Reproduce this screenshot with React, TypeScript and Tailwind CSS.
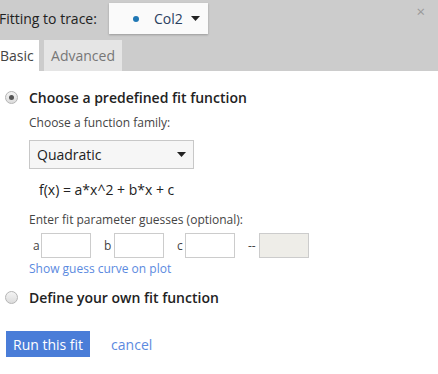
import React, { useState } from 'react';

const font = { fontFamily: '"Open Sans", "Noto Sans", sans-serif' };

const Radio: React.FC<{ checked?: boolean }> = ({ checked }) => (
  <span className="w-[13px] h-[13px] rounded-full border border-[#b5b5b5] bg-gradient-to-b from-[#f4f4f4] to-[#dcdcdc] flex items-center justify-center shrink-0">
    {checked && <span className="w-[5px] h-[5px] rounded-full bg-[#555]" />}
  </span>
);

const Caret: React.FC = () => (
  <svg width="9" height="5" viewBox="0 0 9 5" className="shrink-0">
    <path d="M0 0h9L4.5 5z" fill="#222" />
  </svg>
);

const GuessInput: React.FC<{ label: string; w: string; disabled?: boolean }> = ({ label, w, disabled }) => (
  <div className="flex items-center">
    <span className={`text-[12px] text-[#444] ${w}`}>{label}</span>
    <div className={`w-[50px] h-[25px] border border-[#ccc] ${disabled ? 'bg-[#eeede8]' : 'bg-white'}`} />
  </div>
);

export default function App() {
  const [tab, setTab] = useState('basic');
  return (
    <div className="w-[438px] h-[374px] bg-white overflow-hidden text-[#222]" style={font}>
      {/* Header */}
      <div className="bg-[#cccccc] h-[71px] relative">
        <div className="flex items-center h-[40px] -ml-[1px]">
          <span className="text-[14px] text-[#222] pb-[4px]">Fitting to trace:</span>
          <div className="ml-[12px] mb-[3px] w-[99px] h-[31px] bg-[#fafafa] shadow-[0_1px_2px_rgba(0,0,0,0.25)] flex items-center pl-[24px] pr-[8px]">
            <span className="w-[6px] h-[6px] rounded-full bg-[#1f77b4]" />
            <span className="ml-[15px] text-[14px] text-[#2a3f5f] flex-1">Col2</span>
            <Caret />
          </div>
        </div>
        <span className="absolute right-[13px] top-[0px] text-[#999] text-[15px]">×</span>
        <div className="flex items-end h-[31px]">
          <button
            onClick={() => setTab('basic')}
            className={`h-[31px] w-[39px] text-left text-[14px] ${tab === 'basic' ? 'bg-white text-[#444]' : 'bg-[#e6e6e6] text-[#666]'}`}
          >
            Basic
          </button>
          <button
            onClick={() => setTab('advanced')}
            className={`ml-[5px] h-[31px] w-[78px] text-[14px] ${tab === 'advanced' ? 'bg-white text-[#444]' : 'bg-[#e5e5e5] text-[#777]'}`}
          >
            Advanced
          </button>
        </div>
      </div>

      {/* Body */}
      <div className="pl-[5px] pt-[17px]">
        <div className="flex items-center gap-[11px] h-[18px]">
          <Radio checked />
          <span className="text-[14px] font-semibold text-[#222]">Choose a predefined fit function</span>
        </div>

        <div className="pl-[24px]">
          <div className="text-[12px] text-[#444] mt-[8px]">Choose a function family:</div>
          <div className="mt-[8px] w-[165px] h-[29px] border border-[#c8c8c8] bg-[#f6f6f6] flex items-center pl-[7px] pr-[7px]">
            <span className="text-[14px] text-[#222] flex-1">Quadratic</span>
            <Caret />
          </div>
          <div className="mt-[10px] ml-[10px] text-[14px] text-[#222]">f(x) = a*x^2 + b*x + c</div>

          <div className="mt-[11px] text-[12px] text-[#444]">Enter fit parameter guesses (optional):</div>
          <div className="mt-[4px] flex items-center gap-[13px] pl-[4px]">
            <GuessInput label="a" w="w-[8px]" />
            <GuessInput label="b" w="w-[10px]" />
            <GuessInput label="c" w="w-[8px]" />
            <GuessInput label="--" w="w-[11px]" disabled />
          </div>
          <div className="mt-[2px] text-[12px] text-[#5b8ae0]">Show guess curve on plot</div>
        </div>

        <div className="flex items-center gap-[11px] mt-[10px] h-[18px]">
          <Radio />
          <span className="text-[14px] font-semibold text-[#222]">Define your own fit function</span>
        </div>

        <div className="flex items-center mt-[25px] ml-[1px]">
          <button className="h-[26px] px-[7px] bg-[#4a7dd8] text-white text-[14px]">Run this fit</button>
          <button className="ml-[21px] text-[14px] text-[#5b8ae0]">cancel</button>
        </div>
      </div>
    </div>
  );
}
